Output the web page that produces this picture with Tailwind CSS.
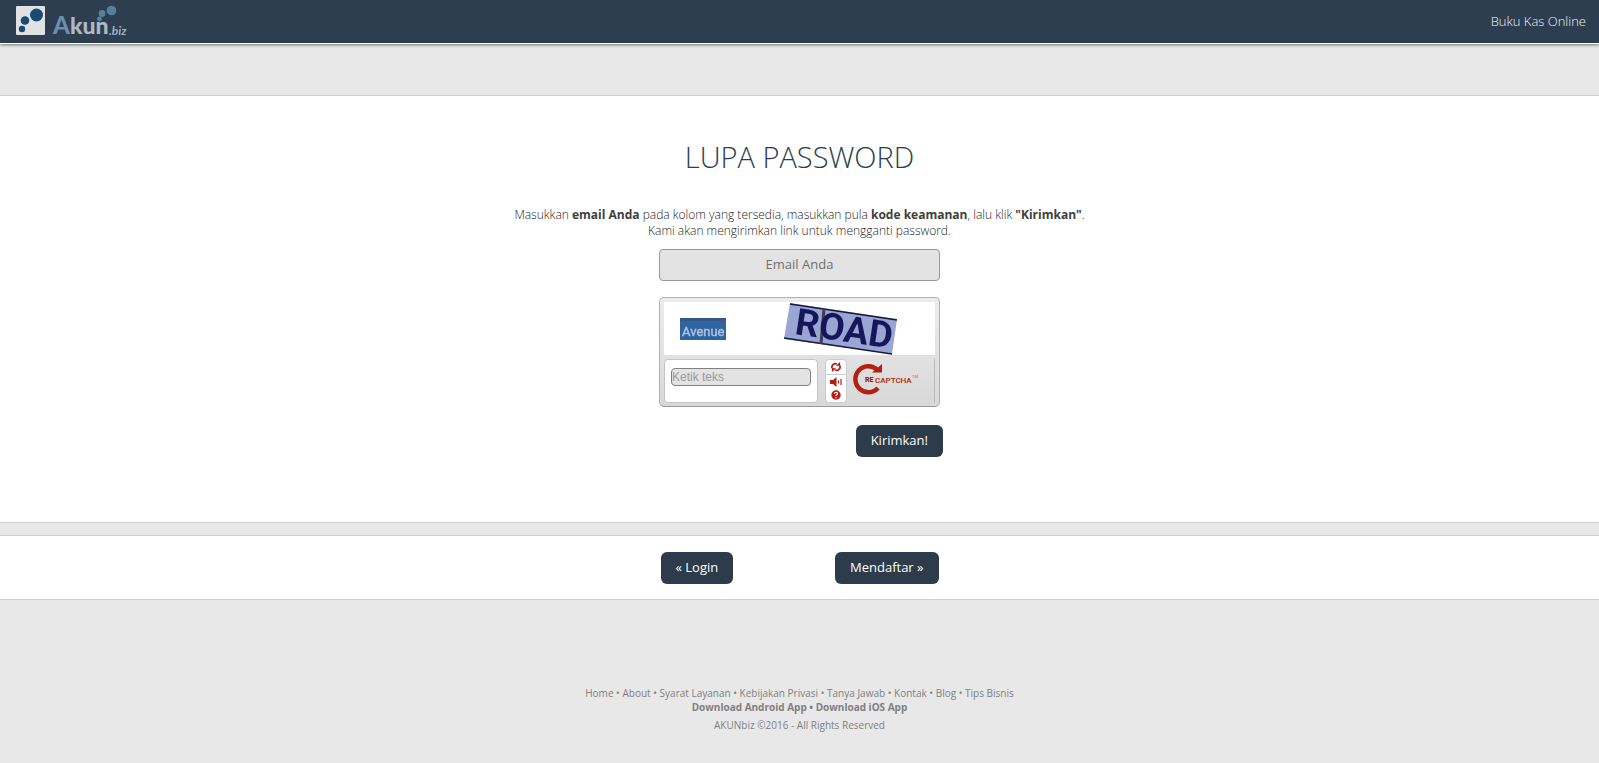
<!DOCTYPE html>
<html lang="id">
<head>
    <meta charset="UTF-8">
    <meta name="viewport" content="width=device-width, initial-scale=1.0">
    <title>Lupa Password - Akun.biz</title>
    <script src="https://cdn.jsdelivr.net/npm/@tailwindcss/browser@4"></script>
</head>
<body class="min-h-screen bg-[#e8e8e8] font-['Open_Sans',sans-serif] text-[#404040]">

    <!-- Header -->
    <header class="flex h-[44px] items-center justify-between border-b border-white bg-[#2c3e50] pl-4 pr-[13px] shadow-[0_1px_3px_rgba(0,0,0,0.5)]">
        <a href="#" aria-label="Akun.biz">
            <svg class="overflow-visible" width="114" height="38" viewBox="0 0 114 38">
                <rect x="0" y="3" width="29" height="29" rx="1" fill="#e0e2e4"/>
                <g fill="#1d4a70">
                    <circle cx="20.500" cy="12" r="6.500"/>
                    <circle cx="9" cy="17.500" r="4.300"/>
                    <circle cx="6" cy="26" r="3.200"/>
                </g>
                <g fill="#5a7d9c">
                    <circle cx="95.500" cy="7.500" r="4.800"/>
                    <circle cx="86" cy="10.500" r="3.400"/>
                    <circle cx="83.500" cy="16" r="2.400"/>
                </g>
                <text x="37" y="31" font-family="Lato, sans-serif" font-weight="900" font-size="24" fill="#6b8fac">A</text>
                <text x="54" y="31" font-family="Lato, sans-serif" font-weight="900" font-size="23" fill="#aeb9c4">kun</text>
                <text x="93" y="32" font-family="Lato, sans-serif" font-weight="700" font-style="italic" font-size="12" fill="#9fb0be">.biz</text>
            </svg>
        </a>
        <a href="#" class="text-[13px] font-light text-[#f0f3f5]">Buku Kas Online</a>
    </header>

    <!-- Form lupa password -->
    <main class="mt-[51px] border-y border-[#cfcfcf] bg-white pt-10 pb-[65px] text-center">
        <h1 class="text-[29px] leading-[42px] font-light text-[#2c3e50]">LUPA PASSWORD</h1>
        <p class="mt-[29px] text-[12px] leading-4 font-light text-[#1c1c1c]">
            Masukkan <b class="font-bold text-[#404040]">email Anda</b> pada kolom yang tersedia, masukkan pula <b class="font-bold text-[#404040]">kode keamanan</b>, lalu klik <b class="font-bold text-[#404040]">"Kirimkan"</b>.<br>
            Kami akan mengirimkan link untuk mengganti password.
        </p>

        <form class="mx-auto mt-[10px] w-[281px]">
            <input type="email" aria-label="Email Anda" placeholder="Email Anda" class="block h-8 w-full rounded-[4px] border border-[#999] bg-[#e3e3e3] pb-[2px] text-center text-[13px] placeholder:text-[#707070]">

            <!-- reCAPTCHA -->
            <div class="mt-4 h-[110px] rounded-[5px] border border-[#b0b0b0] border-b-[#999] bg-linear-to-b from-[#ececec] to-[#d8d8d8] px-1 pt-1">
                <div class="h-[53px] bg-white">
                    <svg class="block w-full overflow-visible" height="53" viewBox="0 0 271 53" preserveAspectRatio="xMinYMin">
                        <defs>
                            <filter id="soft"><feGaussianBlur stdDeviation="0.7"/></filter>
                            <filter id="soft2"><feGaussianBlur stdDeviation="0.4"/></filter>
                        </defs>
                        <rect x="16" y="16" width="46" height="22" fill="#2f64a0"/>
                        <rect x="16" y="16" width="46" height="3" fill="#35588a"/>
                        <text x="18" y="34" font-family="Roboto, sans-serif" font-size="13" fill="#a9bfdc" stroke="#a9bfdc" stroke-width="0.500" filter="url(#soft)">Avenue</text>
                        <g filter="url(#soft2)">
                            <path d="M126 1L233 17L228 52L120 37Z" fill="#9aa5d3"/>
                            <path d="M126 2L233 18M120 36L228 52" stroke="#171b38" stroke-width="1.500"/>
                            <path d="M160 7L157 42" stroke="#3c3d50" stroke-width="3"/>
                            <text transform="translate(130 32) rotate(8.500)" font-family="Roboto, sans-serif" font-weight="700" font-size="37" fill="#15195c">ROAD</text>
                        </g>
                    </svg>
                </div>
                <div class="flex gap-[7px] pt-1">
                    <div class="h-[44px] w-[154px] rounded-[4px] border border-[#c4c4c4] bg-white px-[6px] pt-[8px]">
                        <input type="text" aria-label="Ketik teks" placeholder="Ketik teks" class="block h-[18px] w-full rounded-[4px] border border-[#808080] bg-[#e3e3e3] font-['Liberation_Sans',sans-serif] text-[12px] placeholder:text-[#9a9a9a]">
                    </div>
                    <div class="flex h-[44px] w-[22px] flex-col rounded-[4px] border border-[#ccc] bg-white">
                        <button type="button" aria-label="Ganti gambar" class="flex flex-1 items-center justify-center border-b border-[#ccc]">
                            <svg width="10" height="10" viewBox="0 0 10 10" fill="none" stroke="#b32010" stroke-width="1.800"><path d="M1 6C0.500 3 3 0.800 6 2M9 4C9.500 7 7 9.200 4 8"/><path d="M5 3.800L9.300 4L9 0ZM5 6.200L0.700 6L1 10Z" fill="#b32010" stroke="none"/></svg>
                        </button>
                        <button type="button" aria-label="Dengarkan suara" class="flex flex-1 items-center justify-center">
                            <svg width="12" height="10" viewBox="0 0 12 10"><path d="M0 3H3L6.500 0V10L3 7H0Z" fill="#b32010"/><path d="M8.500 3.500V6.500M11 2V8" stroke="#b32010" stroke-width="1.200"/></svg>
                        </button>
                        <button type="button" aria-label="Bantuan" class="flex flex-1 items-center justify-center">
                            <svg width="10" height="10" viewBox="0 0 10 10"><circle cx="5" cy="5" r="4.700" fill="#b32010"/><path d="M3.500 3.800C3.500 1.700 6.700 1.900 6.500 3.800C6.400 4.800 5 4.700 5 6M5 7V8.300" fill="none" stroke="#fff" stroke-width="1.200"/></svg>
                        </button>
                    </div>
                    <svg class="-ml-[3px] overflow-visible" width="68" height="44" viewBox="0 0 68 44">
                        <path d="M26 10.500A13 13 0 1 0 27 29" fill="none" stroke="#b32010" stroke-width="4.500"/>
                        <path d="M21 13.500H31V5Z" fill="#b32010"/>
                        <text x="14" y="23" font-family="Roboto, sans-serif" font-weight="900" font-size="7" fill="#a01c10">RE</text>
                        <text x="24" y="24" font-family="Roboto, sans-serif" font-weight="500" font-size="8" fill="#b32010">CAPTCHA</text>
                        <text x="61" y="19" font-family="Roboto, sans-serif" font-size="4" fill="#c86a60">TM</text>
                    </svg>
                    <div class="ml-auto h-[44px] w-px bg-[#bbb]"></div>
                </div>
            </div>

            <div class="-mr-[3px] mt-[18px] flex justify-end">
                <button type="submit" class="h-8 rounded-[6px] bg-[#2d3b4a] px-[15px] text-[13px] text-white">Kirimkan!</button>
            </div>
        </form>
    </main>

    <!-- Tautan login / daftar -->
    <nav class="mt-3 border-y border-[#cfcfcf] bg-white pt-4 pb-[15px]">
        <div class="mx-auto flex w-[278px] justify-between text-[13px] leading-[30px] text-white">
            <a href="#" class="rounded-[6px] bg-[#2d3b4a] px-[15px] pb-[2px]">« Login</a>
            <a href="#" class="rounded-[6px] bg-[#2d3b4a] px-[15px] pb-[2px]">Mendaftar »</a>
        </div>
    </nav>

    <!-- Footer -->
    <footer class="mt-[86px] pb-7 text-center text-[10px] leading-[14px] text-[#808080]">
        <p>
            <a href="#">Home</a> • <a href="#">About</a> • <a href="#">Syarat Layanan</a> • <a href="#">Kebijakan Privasi</a> • <a href="#">Tanya Jawab</a> • <a href="#">Kontak</a> • <a href="#">Blog</a> • <a href="#">Tips Bisnis</a>
        </p>
        <p class="font-bold"><a href="#">Download Android App</a> • <a href="#">Download iOS App</a></p>
        <p class="mt-1">AKUNbiz ©2016 - All Rights Reserved</p>
    </footer>

</body>
</html>
